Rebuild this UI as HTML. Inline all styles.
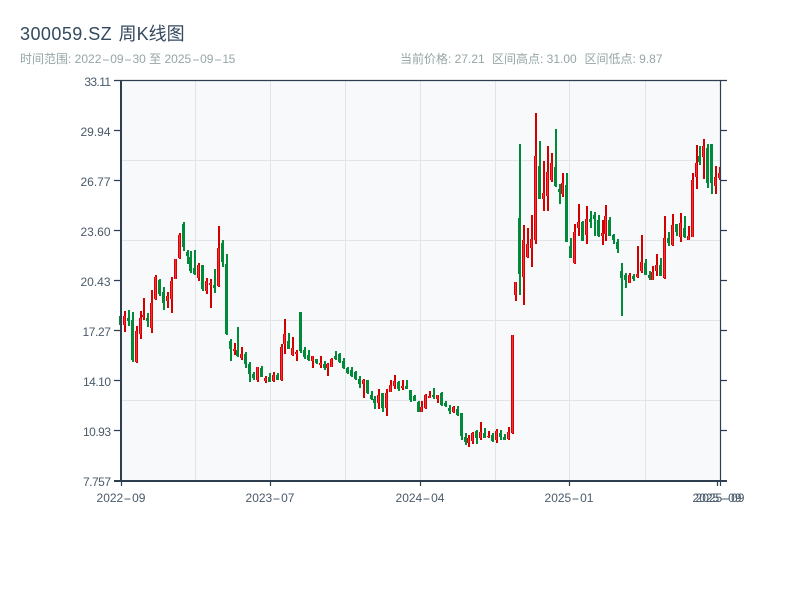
<!DOCTYPE html>
<html><head><meta charset="utf-8"><style>
html,body{margin:0;padding:0;background:#fff}
body{position:relative;width:800px;height:600px;overflow:hidden;font-family:"Liberation Sans","Noto Sans CJK SC",sans-serif}
svg{display:block;position:absolute;left:0;top:0}
svg text{font-family:"Liberation Sans","Noto Sans CJK SC",sans-serif}
.t{position:absolute;white-space:pre;font-size:12px;line-height:14px;color:#95a5a6}
.x{color:#4a5a6a;transform:translateX(-50%);top:491px}
.h{display:inline-block;transform:scaleX(2);margin:0 2.45px}
</style></head><body>
<svg width="800" height="600" viewBox="0 0 800 600" xmlns="http://www.w3.org/2000/svg">
<rect width="800" height="600" fill="#fff"/>
<rect x="121" y="81" width="599" height="400" fill="#f8f9fb"/>
<path d="M121 160.500H720M121 240.500H720M121 320.500H720M121 400.500H720M195.500 81V481M270.500 81V481M345.500 81V481M420.500 81V481M495.500 81V481M569.500 81V481M645.500 81V481" stroke="#e1e4e9" stroke-width="1" fill="none"/>
<defs>
<path id="rb" d="M124.500 316V325M136.500 331V362M140.500 318V334M143.500 315V317M151.500 303V328M155.500 277V299M167.500 296V301M171.500 281V299M175.500 259V279M179.500 235V258M198.500 265V278M206.500 281V291M210.500 283V285M218.500 248V286M234.500 349V351M241.500 354V358M257.500 367V380M265.500 378V381M273.500 375V381M281.500 347V380M284.500 334V344M292.500 348V355M296.500 352V354M312.500 356V361M320.500 363V365M327.500 364V368M331.500 359V367M363.500 380V384M378.500 395V403M386.500 393V408M390.500 385V392M394.500 381V386M402.500 386V388M421.500 407V412M425.500 395V408M429.500 396V398M437.500 395V399M453.500 407V412M468.500 438V443M472.500 433V441M480.500 432V438M488.500 436V437M496.500 431V440M508.500 432V439M512.500 335V433M515.500 282V295M523.500 240V277M527.500 244V257M531.500 239V248M535.500 156V240M543.500 193V199M547.500 172V196M551.500 163V180M562.500 183V194M574.500 232V263M578.500 222V228M586.500 219V235M602.500 233V236M605.500 216V234M629.500 275V283M637.500 274V277M641.500 262V271M652.500 272V280M656.500 265V271M664.500 238V278M672.500 225V245M680.500 223V237M688.500 236V240M692.500 180V237M696.500 163V177M703.500 146V157M715.500 177V186M719.500 173V178"/>
</defs>
<path fill="none" stroke="#008a3a" stroke-width="2" d="M121 316V325M129 310V326M133 312V362M148 313V327M160 279V296M164 287V310M184 222V251M188 250V264M191 251V273M195 250V275M203 265V291M215 269V293M223 240V267M227 254V335M231 339V361M238 327V357M246 352V368M250 362V382M254 372V380M262 366V377M270 373V382M278 373V380M289 333V349M301 312V353M305 347V359M309 350V361M317 359V364M325 361V370M336 351V360M340 353V363M344 358V369M348 367V374M352 367V377M356 371V380M360 376V388M368 380V394M372 391V400M375 396V409M383 393V412M399 381V391M407 380V389M411 390V402M415 395V401M419 401V412M434 388V399M442 392V406M446 401V407M450 405V414M458 406V416M462 413V440M466 433V445M477 430V444M485 428V438M493 433V442M501 430V440M505 434V440M520 144V295M540 141V199M556 129V187M560 184V204M567 173V242M571 238V258M583 221V241M591 211V228M595 212V236M599 215V237M610 217V236M614 234V244M618 239V253M622 263V316M626 273V288M634 274V281M646 259V275M650 271V280M661 258V276M669 232V246M677 224V236M685 216V238M700 146V165M708 144V188M712 144V194"/>
<path fill="none" stroke="#008a3a" stroke-width="3" d="M120.500 316V325M128.500 318V321M132.500 320V360M147.500 318V321M159.500 280V294M163.500 292V303M183.500 224V247M187.500 252V256M190.500 257V271M194.500 268V274M202.500 265V289M214.500 285V288M222.500 243V262M226.500 264V334M230.500 341V349M237.500 350V356M245.500 354V364M249.500 364V374M253.500 374V378M261.500 368V377M269.500 377V382M277.500 375V380M288.500 341V349M300.500 312V351M304.500 350V357M308.500 355V360M316.500 359V363M324.500 364V368M335.500 356V359M339.500 354V362M343.500 361V368M347.500 368V373M351.500 370V376M355.500 372V379M359.500 379V384M367.500 380V393M371.500 395V399M374.500 399V403M382.500 393V408M398.500 382V389M406.500 386V389M410.500 390V400M414.500 396V401M418.500 402V412M433.500 395V397M441.500 393V405M445.500 403V406M449.500 408V411M457.500 409V415M461.500 413V436M465.500 437V442M476.500 431V438M484.500 433V438M492.500 435V441M500.500 433V437M504.500 437V440M519.500 218V274M539.500 166V199M555.500 167V186M559.500 189V192M566.500 185V242M570.500 246V258M582.500 222V241M590.500 219V222M594.500 215V219M598.500 220V236M609.500 220V236M613.500 235V240M617.500 242V249M621.500 271V278M625.500 275V280M633.500 276V279M645.500 263V275M649.500 275V278M660.500 265V276M668.500 238V243M676.500 224V232M684.500 228V237M699.500 156V162M707.500 148V183M711.500 144V183"/>
<path fill="none" stroke="#d40000" stroke-width="2" d="M125 311V332M137 326V363M141 311V339M144 298V320M152 290V333M156 275V300M168 292V308M172 277V313M176 259V279M180 233V259M199 263V281M207 278V294M211 279V308M219 226V287M235 343V355M242 347V360M258 367V382M266 376V383M274 372V382M282 344V381M285 319V354M293 337V356M297 350V361M313 356V368M321 356V368M328 363V376M332 358V367M364 379V398M379 389V409M387 389V416M391 380V392M395 375V389M403 380V390M422 401V412M426 394V409M430 391V398M438 395V403M454 406V413M469 435V447M473 432V444M481 422V440M489 431V438M497 429V443M509 427V440M513 335V434M516 282V301M524 225V305M528 228V258M532 215V267M536 113V244M544 161V211M548 146V211M552 153V182M563 173V197M575 224V264M579 204V236M587 206V244M603 220V245M606 205V241M630 273V283M638 246V278M642 235V273M653 266V280M657 254V276M665 216V279M673 214V246M681 213V242M689 226V240M693 173V237M697 145V189M704 139V179M716 166V194M720 167V180"/>
<use href="#rb" fill="none" stroke="#d40000" stroke-width="3"/>
<use href="#rb" fill="none" stroke="#f0303a" stroke-width="1.100"/>
<path d="M114 80.500H727M114 130.500H121M114 180.500H121M114 230.500H121M114 280.500H121M114 330.500H121M114 380.500H121M114 430.500H121M720 130.500H727M720 180.500H727M720 230.500H727M720 280.500H727M720 330.500H727M720 380.500H727M720 430.500H727M720.500 81V481M121.500 481V486M270.500 481V486M420.500 481V486M569.500 481V486M717.500 481V486M720.500 481V486" stroke="#2c3e50" stroke-width="1.200" fill="none"/>
<path d="M121 81V482M114 481H727" stroke="#2c3e50" stroke-width="2" fill="none"/>
<g font-size="12" fill="#4a5a6a" text-anchor="end">
<text x="110.500" y="86" letter-spacing="-.6">33.11</text>
<text x="110.500" y="136">29.94</text>
<text x="110.500" y="186">26.77</text>
<text x="110.500" y="236">23.60</text>
<text x="110.500" y="286">20.43</text>
<text x="110.500" y="336" letter-spacing="-.4">17.27</text>
<text x="110.500" y="386" letter-spacing="-.5">14.10</text>
<text x="110.500" y="436" letter-spacing="-.5">10.93</text>
<text x="110.500" y="486" letter-spacing="-.5">7.757</text>
</g>
</svg>
<div class="t" style="left:20px;top:23px;font-size:18px;line-height:22px;color:#34495e"><span style="letter-spacing:.45px;margin-right:1.5px">300059.SZ</span> 周K线图</div>
<div class="t" style="left:20px;top:52px">时间范围: 2022<span class="h">-</span>09<span class="h">-</span>30 至 2025<span class="h">-</span>09<span class="h">-</span><span style="letter-spacing:-.4px">15</span></div>
<div class="t" style="left:400px;top:52px">当前价格: 27.21</div>
<div class="t" style="left:492px;top:52px">区间高点: 31.00</div>
<div class="t" style="left:584.500px;top:52px">区间低点: 9.87</div>
<div class="t x" style="left:121px">2022<span class="h">-</span>09</div>
<div class="t x" style="left:270px">2023<span class="h">-</span>07</div>
<div class="t x" style="left:420px">2024<span class="h">-</span>04</div>
<div class="t x" style="left:569px">2025<span class="h">-</span>01</div>
<div class="t x" style="left:717px">2025<span class="h">-</span>09</div>
<div class="t x" style="left:720px">2025<span class="h">-</span>09</div>
</body></html>
